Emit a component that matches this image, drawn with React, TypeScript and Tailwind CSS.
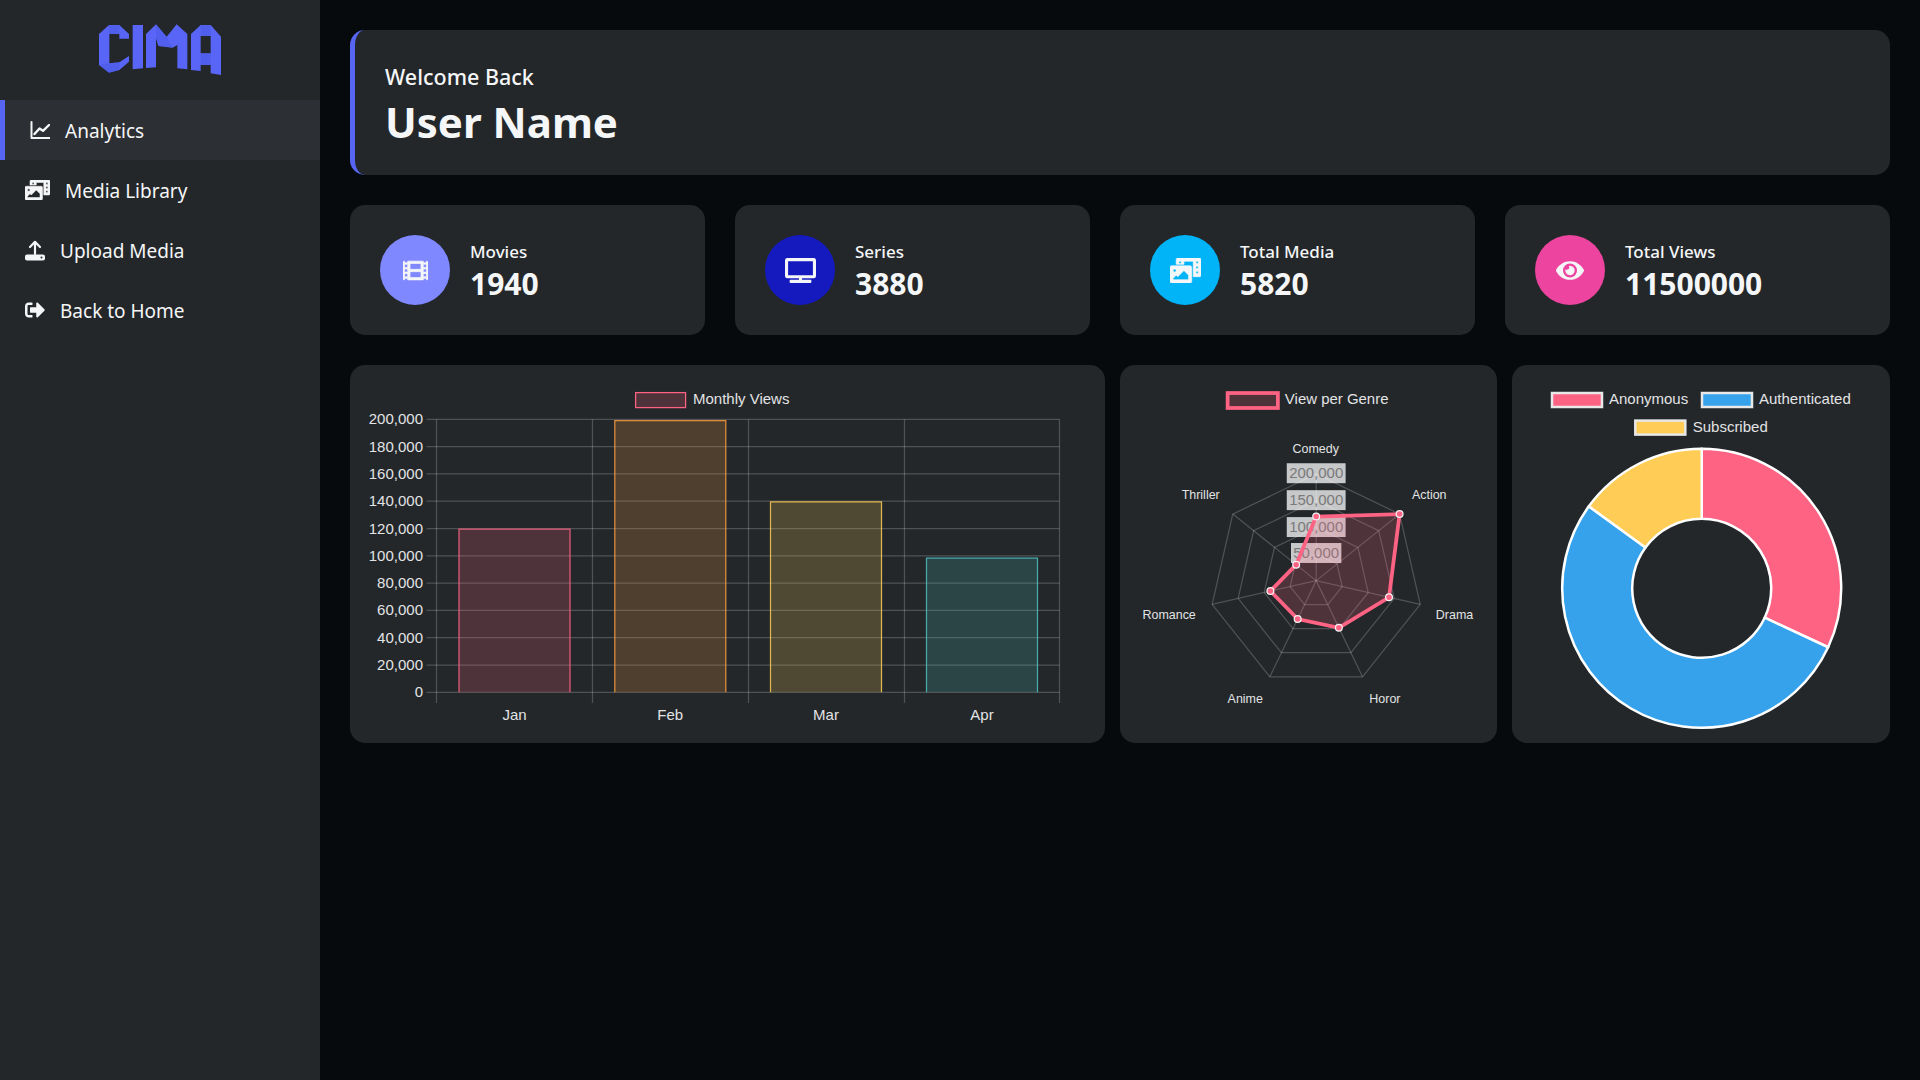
import React from 'react';
import { FaPhotoVideo, FaSignOutAlt, FaFilm, FaTv, FaEye } from 'react-icons/fa';

// thinner than the FaChartLine / FaUpload glyphs, these two match the picture better
const ChartLineIcon = ({ className }: { className?: string }) => (
    <svg viewBox="0 0 20 20" className={className} fill="none" stroke="currentColor" strokeLinecap="round" strokeLinejoin="round">
        <path d="M1.5 2V18H19.5" strokeWidth="2" />
        <path d="M4.5 14L9.5 8.5L13 10.8L19 5" strokeWidth="2.4" />
    </svg>
);

const UploadIcon = ({ className }: { className?: string }) => (
    <svg viewBox="0 0 20 21" className={className}>
        <path d="M5 7L10 1.8L15 7M10 3V14" fill="none" stroke="currentColor" strokeWidth="2.2" strokeLinecap="round" strokeLinejoin="round" />
        <rect x="0" y="14.5" width="20" height="6" rx="2" fill="currentColor" />
        <circle cx="16.5" cy="17.5" r="1" fill="#23272a" />
    </svg>
);

const navItems = [
    { label: 'Analytics', icon: ChartLineIcon, iconClass: 'w-[20px] h-[20px]', active: true },
    { label: 'Media Library', icon: FaPhotoVideo, iconClass: 'w-[25px] h-[20px] stroke-current stroke-[14]', active: false },
    { label: 'Upload Media', icon: UploadIcon, iconClass: 'w-[20px] h-[21px]', active: false },
    { label: 'Back to Home', icon: FaSignOutAlt, iconClass: 'w-[20px] h-[20px]', active: false },
];

const stats = [
    { label: 'Movies', value: '1940', icon: FaFilm, iconClass: 'w-[25px] h-[25px] stroke-current stroke-[14]', circle: 'bg-[#8088ff]' },
    { label: 'Series', value: '3880', icon: FaTv, iconClass: 'w-[31px] h-[25px]', circle: 'bg-[#151abf]' },
    { label: 'Total Media', value: '5820', icon: FaPhotoVideo, iconClass: 'w-[31px] h-[25px] stroke-current stroke-[14]', circle: 'bg-[#01b4f8]' },
    { label: 'Total Views', value: '11500000', icon: FaEye, iconClass: 'w-[28px] h-[25px]', circle: 'bg-[#ed459f]' },
];

const GRID = 'rgba(255,255,255,0.2)';
const CHART_TEXT = '#e2e3e4';
const CHART_FONT = '"Liberation Sans", Arial, sans-serif';

const Logo = () => (
    <svg viewBox="0 0 480 240" className="w-[160px] h-[80px]">
        <g fill="#5865f6">
            <polygon points="57,72 87,45 118,45 147,72 147,86 118,86 118,72 88,72 88,160 118,157 147,138 147,155 118,180 87,188 57,165" />
            <polygon points="158,45 189,45 189,175 158,178" />
            <polygon points="198,72 228,43 260,80 290,43 322,72 322,178 292,175 292,105 278,113 235,108 228,85 228,172 198,174" />
            <polygon fillRule="evenodd" points="333,72 362,45 392,45 423,80 423,195 392,190 392,165 362,165 362,183 333,180 333,72 362,78 362,130 392,130 392,78 362,78" />
        </g>
        <g fill="#4b59e4">
            <polygon points="87,45 87,72 118,72 118,45" opacity="0.55" />
            <polygon points="57,165 87,188 118,180 118,157 88,160" opacity="0.55" />
            <polygon points="228,43 228,85 235,108 278,113 260,80" opacity="0.45" />
            <polygon points="362,45 392,45 392,78 362,78" opacity="0.55" />
            <polygon points="362,130 392,130 392,165 362,165" opacity="0.55" />
        </g>
    </svg>
);

const BarChart = () => {
    const left = 86.5;
    const right = 709.5;
    const top = 54.3;
    const bottom = 327.3;
    const yTicks = [0, 20000, 40000, 60000, 80000, 100000, 120000, 140000, 160000, 180000, 200000];
    const xLines = [left, 242.5, 398.5, 554.5, right];
    const bars = [
        { label: 'Jan', value: 119500, fill: 'rgba(255,99,132,0.2)', stroke: 'rgb(255,99,132)', cx: 164.5 },
        { label: 'Feb', value: 199000, fill: 'rgba(255,159,64,0.2)', stroke: 'rgb(255,159,64)', cx: 320.3 },
        { label: 'Mar', value: 139500, fill: 'rgba(255,205,86,0.2)', stroke: 'rgb(255,205,86)', cx: 476 },
        { label: 'Apr', value: 98300, fill: 'rgba(75,192,192,0.2)', stroke: 'rgb(75,192,192)', cx: 632 },
    ];
    const yOf = (v: number) => bottom - (v / 200000) * (bottom - top);

    return (
        <svg viewBox="0 0 755 378" className="w-full h-full" style={{ fontFamily: CHART_FONT }}>
            <rect x="285.6" y="27.6" width="50" height="15" fill="rgba(255,99,132,0.2)" stroke="rgb(255,99,132)" strokeWidth="1.25" />
            <text x="343" y="39" fontSize="15" fill={CHART_TEXT}>Monthly Views</text>
            {yTicks.map((t) => (
                <g key={t}>
                    <line x1={76.5} x2={right} y1={yOf(t)} y2={yOf(t)} stroke={GRID} strokeWidth="1.25" />
                    <text x="73" y={yOf(t) + 5} fontSize="15" textAnchor="end" fill={CHART_TEXT}>{t.toLocaleString('en-US')}</text>
                </g>
            ))}
            {xLines.map((x) => (
                <line key={x} x1={x} x2={x} y1={top} y2={338} stroke={GRID} strokeWidth="1.25" />
            ))}
            {bars.map((b) => (
                <g key={b.label}>
                    <rect x={b.cx - 55.5} y={yOf(b.value)} width="111" height={bottom - yOf(b.value)} fill={b.fill} />
                    <path d={`M${b.cx - 55.5} ${bottom}V${yOf(b.value)}H${b.cx + 55.5}V${bottom}`} fill="none" stroke={b.stroke} strokeWidth="1.25" opacity="0.85" />
                    <text x={b.cx} y="355" fontSize="15" textAnchor="middle" fill={CHART_TEXT}>{b.label}</text>
                </g>
            ))}
        </svg>
    );
};

const RadarChart = () => {
    const cx = 196.7;
    const cy = 215.7;
    const radius = 107;
    const values = [120000, 200000, 140000, 98000, 80000, 88000, 48000];
    const point = (i: number, v: number) => {
        const a = (i * 2 * Math.PI) / 7;
        const r = (v / 200000) * radius;
        return [cx + r * Math.sin(a), cy - r * Math.cos(a)];
    };
    const ring = (v: number) => values.map((_, i) => point(i, v).join(',')).join(' ');
    const ticks = [
        { label: '200,000', y: 113 },
        { label: '150,000', y: 140 },
        { label: '100,000', y: 167 },
        { label: '50,000', y: 193 },
    ];

    return (
        <svg viewBox="0 0 378 378" className="w-full h-full" style={{ fontFamily: CHART_FONT }}>
            <rect x="107.9" y="27.6" width="50.4" height="15" fill="rgba(255,99,132,0.2)" stroke="rgb(255,99,132)" strokeWidth="3.75" />
            <text x="165.3" y="39" fontSize="15" fill={CHART_TEXT}>View per Genre</text>

            {[50000, 100000, 150000, 200000].map((v) => (
                <polygon key={v} points={ring(v)} fill="none" stroke={GRID} strokeWidth="1.25" />
            ))}
            {values.map((_, i) => {
                const [x, y] = point(i, 200000);
                return <line key={i} x1={cx} y1={cy} x2={x} y2={y} stroke={GRID} strokeWidth="1.25" />;
            })}

            {ticks.map((t) => {
                const w = t.label.length === 7 ? 59 : 50.5;
                return (
                    <g key={t.label}>
                        <rect x={cx - w / 2} y={t.y - 15} width={w} height="20" fill="rgba(255,255,255,0.75)" />
                        <text x={cx} y={t.y} fontSize="15" textAnchor="middle" fill="#7a7a7a">{t.label}</text>
                    </g>
                );
            })}

            <polygon
                points={values.map((v, i) => point(i, v).join(',')).join(' ')}
                fill="rgba(255,99,132,0.2)"
                stroke="rgb(255,99,132)"
                strokeWidth="3.75"
            />
            {values.map((v, i) => {
                const [x, y] = point(i, v);
                return <circle key={i} cx={x} cy={y} r="3.4" fill="rgb(255,99,132)" stroke="#f3f3f3" strokeWidth="1.25" />;
            })}

            <g fontSize="12.5" fill={CHART_TEXT}>
                <text x="196.3" y="87.7" textAnchor="middle">Comedy</text>
                <text x="292.7" y="134.3">Action</text>
                <text x="316.7" y="254">Drama</text>
                <text x="250" y="338.3">Horor</text>
                <text x="143.3" y="338.3" textAnchor="end">Anime</text>
                <text x="76" y="254" textAnchor="end">Romance</text>
                <text x="100" y="134.3" textAnchor="end">Thriller</text>
            </g>
        </svg>
    );
};

const DoughnutChart = () => {
    const cx = 189.7;
    const cy = 223.3;
    const outer = 139.5;
    const inner = 69.5;
    const slices = [
        { from: 0, to: 115, color: 'rgb(255,99,132)' },
        { from: 115, to: 306, color: 'rgb(54,162,235)' },
        { from: 306, to: 360, color: 'rgb(255,205,86)' },
    ];
    const at = (deg: number, r: number) => {
        const a = (deg * Math.PI) / 180;
        return `${cx + r * Math.sin(a)} ${cy - r * Math.cos(a)}`;
    };
    const arc = (from: number, to: number) => {
        const large = to - from > 180 ? 1 : 0;
        return `M${at(from, outer)}A${outer} ${outer} 0 ${large} 1 ${at(to, outer)}L${at(to, inner)}A${inner} ${inner} 0 ${large} 0 ${at(from, inner)}Z`;
    };
    const legend = [
        { label: 'Anonymous', x: 40, y: 28, tx: 97, ty: 39, color: 'rgb(255,99,132)' },
        { label: 'Authenticated', x: 190, y: 28, tx: 247, ty: 39, color: 'rgb(54,162,235)' },
        { label: 'Subscribed', x: 123.3, y: 55.6, tx: 180.7, ty: 67, color: 'rgb(255,205,86)' },
    ];

    return (
        <svg viewBox="0 0 378 378" className="w-full h-full" style={{ fontFamily: CHART_FONT }}>
            {legend.map((l) => (
                <g key={l.label}>
                    <rect x={l.x} y={l.y} width="50" height="14" fill={l.color} stroke="#e8e8e8" strokeWidth="2.5" />
                    <text x={l.tx} y={l.ty} fontSize="15" fill={CHART_TEXT}>{l.label}</text>
                </g>
            ))}
            {slices.map((s) => (
                <path key={s.from} d={arc(s.from, s.to)} fill={s.color} stroke="#ffffff" strokeWidth="2.5" strokeLinejoin="round" />
            ))}
        </svg>
    );
};

const App: React.FC = () => {
    return (
        <div className="min-h-screen flex bg-[#060a0c] text-[#f5f6f7] font-['Noto_Sans',sans-serif]">
            <aside className="w-[320px] shrink-0 bg-[#23272a]">
                <div className="h-[100px] flex items-start pl-[80px] pt-[10px]">
                    <Logo />
                </div>
                <nav>
                    {navItems.map((item) => {
                        const Icon = item.icon;
                        return (
                            <div
                                key={item.label}
                                className={
                                    item.active
                                        ? 'h-[60px] flex items-center gap-[15px] pl-[25px] border-l-[5px] border-[#5865f2] bg-[#2c2f33] text-[19px]'
                                        : 'h-[60px] flex items-center gap-[15px] pl-[25px] text-[19px]'
                                }
                            >
                                <Icon className={item.iconClass} />
                                <span className="pt-[2px]">{item.label}</span>
                            </div>
                        );
                    })}
                </nav>
            </aside>

            <main className="flex-1 p-[30px] flex flex-col gap-[30px]">
                <section className="h-[145px] rounded-[15px] border-l-[5px] border-[#5865f2] bg-[#23272a] pl-[30px] pt-[7px] flex flex-col justify-center">
                    <p className="text-[21.5px] leading-[30px] font-medium">Welcome Back</p>
                    <h1 className="text-[42px] leading-[56px] font-bold pt-[2px]">User Name</h1>
                </section>

                <section className="grid grid-cols-[355px_355px_355px_1fr] gap-[30px]">
                    {stats.map((s) => {
                        const Icon = s.icon;
                        return (
                            <div key={s.label} className="h-[130px] rounded-[15px] bg-[#23272a] pl-[30px] flex items-center gap-[20px]">
                                <div className={`w-[70px] h-[70px] rounded-full flex items-center justify-center ${s.circle}`}>
                                    <Icon className={s.iconClass} />
                                </div>
                                <div className="pt-[4px]">
                                    <p className="text-[17px] leading-[24px] font-medium">{s.label}</p>
                                    <p className="text-[30px] leading-[40px] font-bold">{s.value}</p>
                                </div>
                            </div>
                        );
                    })}
                </section>

                <section className="grid grid-cols-[755px_377px_1fr] gap-[15px]">
                    <div className="h-[378px] rounded-[15px] bg-[#23272a]"><BarChart /></div>
                    <div className="h-[378px] rounded-[15px] bg-[#23272a]"><RadarChart /></div>
                    <div className="h-[378px] rounded-[15px] bg-[#23272a]"><DoughnutChart /></div>
                </section>
            </main>
        </div>
    );
};

export default App;
